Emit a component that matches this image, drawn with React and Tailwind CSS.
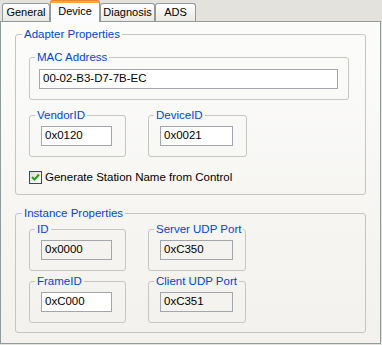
import React from 'react'

function Tab({ label, active, width }) {
  if (active) {
    return (
      <div
        className={`relative z-10 -mb-px h-[22px] ${width} rounded-t-[3px] border-x border-[#919B9C] bg-[#FCFCFE] flex flex-col`}
      >
        <div className="h-[3px] rounded-t-[3px] bg-[#F7A93B] border-t border-[#E68B2C] -mx-px" />
        <div className="flex-1 flex items-center justify-center pb-[3px]">{label}</div>
      </div>
    )
  }
  return (
    <div
      className={`h-[18px] ${width} rounded-t-[3px] border border-b-0 border-[#919B9C] bg-linear-to-b from-[#FFFFFF] to-[#E9E8E3] flex items-center justify-center`}
    >
      {label}
    </div>
  )
}

function Group({ label, className, children }) {
  return (
    <fieldset className={`border border-[#C6C6C0] rounded-[3px] p-0 m-0 ${className}`}>
      <legend className="ml-[6px] px-[2px] leading-[13px] text-[#0046D5] whitespace-nowrap">{label}</legend>
      {children}
    </fieldset>
  )
}

function SubGroup({ label, className, children }) {
  return (
    <fieldset className={`border border-[#C6C6C0] rounded-[3px] p-0 m-0 ${className}`}>
      <legend className="ml-[5px] px-[2px] leading-[13px] text-[#0046D5] whitespace-nowrap">{label}</legend>
      {children}
    </fieldset>
  )
}

function Field({ value, disabled, className }) {
  return (
    <div
      className={`h-[20px] border border-[#A3A7AB] flex items-center pl-[3px] ${
        disabled ? 'bg-[#F4F3EF]' : 'bg-white'
      } ${className}`}
    >
      {value}
    </div>
  )
}

export default function App() {
  return (
    <div className="w-[382px] h-[345px] bg-[#E4E2DD] text-[11.5px] text-black font-['Liberation_Sans',Arial,sans-serif] overflow-hidden">
      {/* tabs */}
      <div className="flex items-end h-[21px] pl-[2px] text-[11px]">
        <Tab label="General" width="w-[48px]" />
        <Tab label="Device" width="w-[50px]" active />
        <Tab label="Diagnosis" width="w-[55px]" />
        <Tab label="ADS" width="w-[41px]" />
      </div>

      {/* panel */}
      <div className="w-[381px] h-[323px] border border-[#919B9C] bg-linear-to-b from-[#FCFCFB] to-[#F2F1ED] pl-[14px] pt-[6px]">
        <Group label="Adapter Properties" className="w-[351px] h-[167px]">
          <div className="pl-[13px] pt-[10px]">
            <SubGroup label="MAC Address" className="w-[320px] h-[49px]">
              <div className="pt-[5px] pl-[9px]">
                <Field value="00-02-B3-D7-7B-EC" className="w-[299px]" />
              </div>
            </SubGroup>

            <div className="flex gap-[22px] mt-[9px]">
              <SubGroup label="VendorID" className="w-[97px] h-[48px]">
                <div className="pt-[4px] pl-[11px]">
                  <Field value="0x0120" className="w-[71px]" />
                </div>
              </SubGroup>
              <SubGroup label="DeviceID" className="w-[99px] h-[48px]">
                <div className="pt-[4px] pl-[11px]">
                  <Field value="0x0021" className="w-[73px]" />
                </div>
              </SubGroup>
            </div>

            <div className="flex items-center gap-[3px] mt-[14px] h-[13px]">
              <div className="w-[13px] h-[13px] border border-[#1C5180] bg-linear-to-br from-[#DCDCD7] to-[#FFFFFF] flex items-center justify-center">
                <svg width="9" height="9" viewBox="0 0 9 9">
                  <path d="M1 4 L3.5 6.5 L8 1.5" fill="none" stroke="#21A121" strokeWidth="2" />
                </svg>
              </div>
              <span className="leading-[13px]">Generate Station Name from Control</span>
            </div>
          </div>
        </Group>

        <Group label="Instance Properties" className="w-[351px] h-[126px] mt-[12px]">
          <div className="pl-[13px] pt-[3px] grid grid-cols-[97px_99px] gap-x-[22px] gap-y-[4px]">
            <SubGroup label="ID" className="h-[48px]">
              <div className="pt-[4px] pl-[11px]">
                <Field value="0x0000" disabled className="w-[71px]" />
              </div>
            </SubGroup>
            <SubGroup label="Server UDP Port" className="h-[48px] w-[98px]">
              <div className="pt-[4px] pl-[11px]">
                <Field value="0xC350" disabled className="w-[73px]" />
              </div>
            </SubGroup>
            <SubGroup label="FrameID" className="h-[48px]">
              <div className="pt-[4px] pl-[11px]">
                <Field value="0xC000" className="w-[71px]" />
              </div>
            </SubGroup>
            <SubGroup label="Client UDP Port" className="h-[48px] w-[98px]">
              <div className="pt-[4px] pl-[11px]">
                <Field value="0xC351" disabled className="w-[73px]" />
              </div>
            </SubGroup>
          </div>
        </Group>
      </div>
    </div>
  )
}
